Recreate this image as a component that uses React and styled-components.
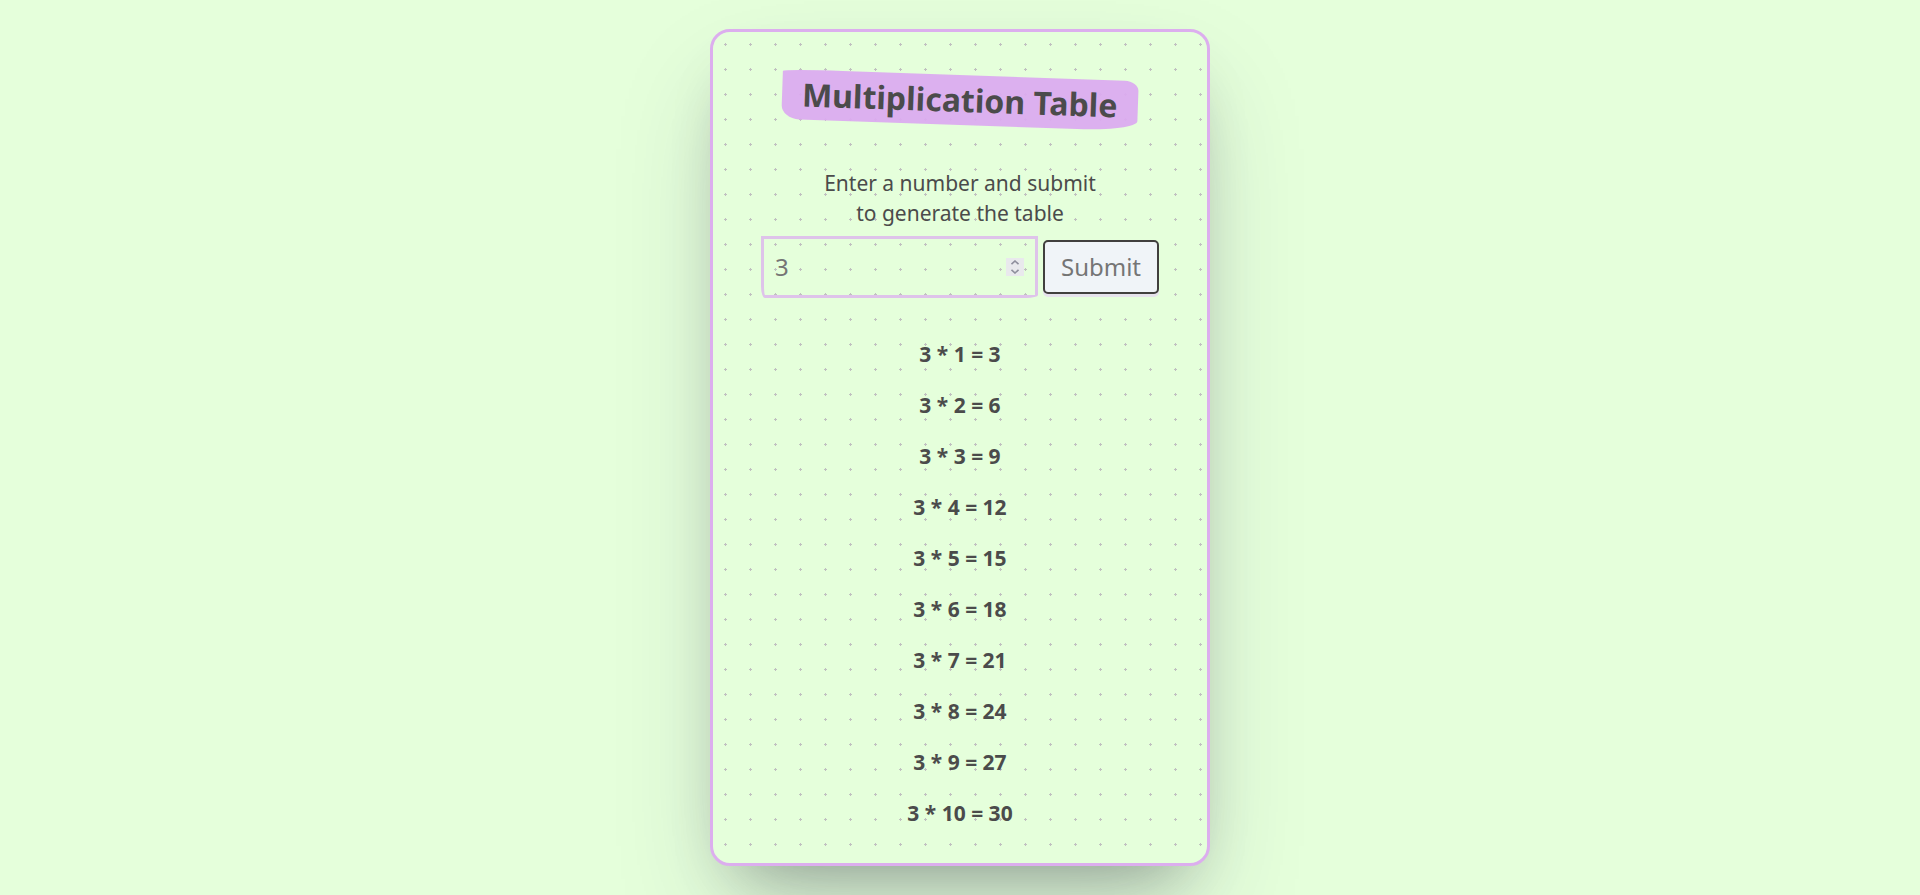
import React, { useState } from "react";
import styled, { createGlobalStyle } from "styled-components";

const GlobalStyle = createGlobalStyle`
  * {
    box-sizing: border-box;
  }

  body {
    margin: 0;
    background: #e5ffdb;
    color: #4b4b4b;
    font-family: "Noto Sans", sans-serif;
    font-size: 21px;
    line-height: 30px;
  }
`;

const Page = styled.main`
  display: flex;
  justify-content: center;
  padding: 29px 16px;
`;

const Card = styled.section`
  display: flex;
  flex-direction: column;
  align-items: center;
  width: 100%;
  max-width: 500px;
  padding: 43px 16px 24px;
  border: 3px solid #dcaeee;
  border-radius: 20px;
  background: #e5ffdb radial-gradient(silver 7%, transparent 7%) 0 0 / 25px 25px;
  box-shadow:
    rgba(50, 50, 93, 0.25) 0 50px 100px -20px,
    rgba(0, 0, 0, 0.3) 0 30px 60px -30px;
`;

const Title = styled.h1`
  margin: 0;
  padding: 0 20px;
  border-radius: 60px 14px 60px 18px / 2px 10px 10px 14px;
  background: rgba(220, 170, 240, 0.93);
  font-size: 32px;
  line-height: 50px;
  transform: rotate(2deg);
`;

const Form = styled.form`
  display: flex;
  flex-direction: column;
  align-items: center;
  margin-top: 43px;
`;

const Prompt = styled.label`
  max-width: 300px;
  text-align: center;
`;

const Controls = styled.div`
  display: flex;
  align-items: center;
  gap: 5px;
  margin-top: 8px;
`;

const Field = styled.div`
  display: flex;
  align-items: center;
  width: 277px;
  height: 62px;
  padding: 0 11px;
  border: 3px solid #dec3ea;
  border-radius: 0 0 12px 4px / 0 0 3px 12px;
`;

const NumberInput = styled.input`
  flex: 1;
  min-width: 0;
  padding: 0;
  border: 0;
  outline: 0;
  background: transparent;
  color: inherit;
  font: inherit;
  font-size: 24px;
  appearance: textfield;

  &::placeholder {
    color: #757575;
  }

  &::-webkit-inner-spin-button {
    appearance: none;
    margin: 0;
  }
`;

const Stepper = styled.div`
  display: flex;
  flex-direction: column;
  width: 18px;
  background: #e9e9ed;
`;

const StepButton = styled.button`
  display: flex;
  justify-content: center;
  align-items: center;
  height: 9px;
  padding: 0;
  border: 0;
  background: transparent;
  color: #8f8f9d;
`;

const SubmitButton = styled.button`
  height: 54px;
  padding: 0 16px;
  border: 2px solid #41403e;
  border-radius: 5px;
  background: #f0f4f8;
  box-shadow: 0 3px 0 #e6e3ec;
  color: #757575;
  font: inherit;
  font-size: 24px;
`;

const Results = styled.ul`
  margin: 31px 0 0;
  padding: 0;
  list-style: none;
  font-weight: 700;
  text-align: center;
`;

const Result = styled.li`
  line-height: 51px;
`;

export default function App() {
  const [value, setValue] = useState("");
  const [base, setBase] = useState(3);

  const step = (amount) => setValue(String(Number(value || base) + amount));
  const submit = (event) => {
    event.preventDefault();
    if (value) setBase(Number(value));
  };

  return (
    <>
      <GlobalStyle />
      <Page>
        <Card>
          <Title>Multiplication Table</Title>
          <Form onSubmit={submit}>
            <Prompt htmlFor="number">
              Enter a number and submit
              <br />
              to generate the table
            </Prompt>
            <Controls>
              <Field>
                <NumberInput
                  id="number"
                  type="number"
                  placeholder="3"
                  value={value}
                  onChange={(event) => setValue(event.target.value)}
                />
                <Stepper>
                  <StepButton type="button" aria-label="Increase" onClick={() => step(1)}>
                    <svg width="8" height="5" viewBox="0 0 8 5" fill="none" stroke="currentColor" strokeWidth="1.6">
                      <path d="M0.5 4.2 L4 1 L7.5 4.2" />
                    </svg>
                  </StepButton>
                  <StepButton type="button" aria-label="Decrease" onClick={() => step(-1)}>
                    <svg width="8" height="5" viewBox="0 0 8 5" fill="none" stroke="currentColor" strokeWidth="1.6">
                      <path d="M0.5 0.8 L4 4 L7.5 0.8" />
                    </svg>
                  </StepButton>
                </Stepper>
              </Field>
              <SubmitButton type="submit">Submit</SubmitButton>
            </Controls>
          </Form>
          <Results>
            {Array.from({ length: 10 }, (_, index) => index + 1).map((factor) => (
              <Result key={factor}>{`${base} * ${factor} = ${base * factor}`}</Result>
            ))}
          </Results>
        </Card>
      </Page>
    </>
  );
}
